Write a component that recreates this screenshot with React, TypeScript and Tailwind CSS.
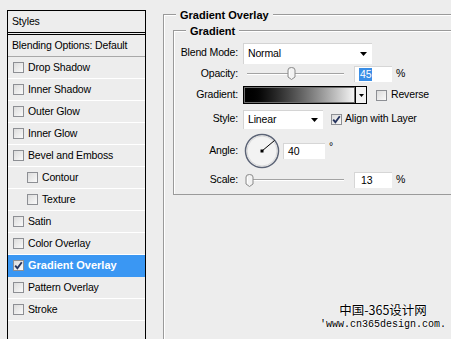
import React from 'react';

const styleRows = [
    { label: 'Drop Shadow' },
    { label: 'Inner Shadow' },
    { label: 'Outer Glow' },
    { label: 'Inner Glow' },
    { label: 'Bevel and Emboss' },
    { label: 'Contour', indent: true },
    { label: 'Texture', indent: true },
    { label: 'Satin' },
    { label: 'Color Overlay' },
    { label: 'Gradient Overlay', active: true },
    { label: 'Pattern Overlay' },
    { label: 'Stroke' },
];

function Check({ checked = false }: { checked?: boolean }) {
    return (
        <span className="w-[11px] h-[11px] shrink-0 border border-[#8d8f94] bg-gradient-to-br from-[#dcdcdc] to-[#fafafa] flex items-center justify-center">
            {checked && (
                <svg width="9" height="9" viewBox="0 0 9 9">
                    <path d="M1.2 4.6 L3.4 7.2 L7.8 1.3" stroke="#26345e" strokeWidth="1.9" fill="none" />
                </svg>
            )}
        </span>
    );
}

function Arrow() {
    return (
        <svg width="7" height="4" viewBox="0 0 7 4">
            <path d="M0 0 H7 L3.5 4 Z" fill="#000" />
        </svg>
    );
}

function Thumb({ className }: { className: string }) {
    return (
        <svg className={`absolute top-[1px] ${className}`} width="9" height="13" viewBox="0 0 9 13">
            <path d="M1 3 Q1 0.5 4.5 0.5 Q8 0.5 8 3 V10 L4.5 12.5 L1 10 Z" fill="#f2f2f2" stroke="#8a8a8a" />
            <path d="M2.5 3 V9.5" stroke="#ffffff" />
        </svg>
    );
}

function Slider({ thumb }: { thumb: string }) {
    return (
        <div className="relative w-[97px] h-[15px] flex items-center">
            <div className="w-full h-[2px] border-t border-[#a3a3a3] bg-white" />
            <Thumb className={thumb} />
        </div>
    );
}

function NumBox({ children, w }: { children: React.ReactNode; w: string }) {
    return (
        <div className={`${w} h-[16px] bg-white border-t border-l border-[#d6d6d6] flex items-center pl-[4px]`}>
            {children}
        </div>
    );
}

export default function App() {
    return (
        <div className="relative w-[451px] h-[339px] overflow-hidden bg-[#ededed] flex font-['Liberation_Sans',sans-serif] text-[10.5px] tracking-[-0.15px] text-black">

            {/* Styles list */}
            <div className="ml-[7px] mt-[10px] w-[139px] h-[340px] shrink-0 border-x border-t border-black flex flex-col">
                <div className="h-[21px] flex items-center pl-[4px]">Styles</div>
                <div className="border-b-[3px] border-double border-black" />
                <div className="h-[22px] flex items-center pl-[4px] border-b border-[#a8a8a8]">Blending Options: Default</div>
                {styleRows.map(r => (
                    <div
                        key={r.label}
                        className={`h-[22px] flex items-center gap-[4px] border-b ${r.indent ? 'pl-[19px]' : 'pl-[5px]'} ${r.active ? 'bg-[#3a97f3] border-[#3a97f3] text-white font-bold text-[11px] tracking-normal' : 'border-white'}`}
                    >
                        <Check checked={r.active} />
                        <span>{r.label}</span>
                    </div>
                ))}
            </div>

            {/* Gradient Overlay group */}
            <div className="flex-1 ml-[17px] mt-[14px] border-l border-t border-[#9a9a9a] shadow-[inset_1px_1px_0_#fff] flex flex-col">
                <div className="-mt-[8px] ml-[12px] px-[4px] w-fit bg-[#ededed] font-bold text-[11px] tracking-normal leading-[16px]">Gradient Overlay</div>

                <div className="ml-[9px] mt-[7px] pb-[6px] border-l border-t border-b border-[#9a9a9a] shadow-[inset_1px_1px_0_#fff] flex flex-col">
                    <div className="-mt-[8px] ml-[12px] px-[4px] w-fit bg-[#ededed] font-bold text-[11px] tracking-normal leading-[16px]">Gradient</div>

                    {/* Blend Mode */}
                    <div className="mt-[3px] h-[22px] flex items-center">
                        <span className="w-[64px] text-right">Blend Mode:</span>
                        <div className="ml-[5px] w-[129px] h-[21px] bg-white border-t border-l border-[#d4d4d4] flex items-center justify-between pl-[4px] pr-[5px]">
                            <span>Normal</span>
                            <Arrow />
                        </div>
                    </div>

                    {/* Opacity */}
                    <div className="mt-[1px] h-[17px] flex items-center">
                        <span className="w-[64px] text-right">Opacity:</span>
                        <div className="ml-[9px]"><Slider thumb="left-[40px]" /></div>
                        <div className="ml-[10px]">
                            <NumBox w="w-[38px]">
                                <span className="bg-[#3a8ee6] text-white leading-[13px] px-[1px]">45</span>
                            </NumBox>
                        </div>
                        <span className="ml-[4px]">%</span>
                    </div>

                    {/* Gradient */}
                    <div className="mt-[4px] h-[18px] flex items-center">
                        <span className="w-[64px] text-right">Gradient:</span>
                        <div className="ml-[5px] w-[124px] h-[18px] border border-black flex">
                            <div className="flex-1 border border-[#6d6d6d] bg-gradient-to-r from-black to-[#f4f4f4]" />
                            <div className="w-[11px] border-l border-black bg-[#f2f2f2] flex items-center justify-center">
                                <svg width="5" height="3" viewBox="0 0 5 3"><path d="M0 0 H5 L2.5 3 Z" fill="#000" /></svg>
                            </div>
                        </div>
                        <div className="ml-[9px]"><Check /></div>
                        <span className="ml-[4px]">Reverse</span>
                    </div>

                    {/* Style */}
                    <div className="mt-[5px] h-[20px] flex items-center">
                        <span className="w-[64px] text-right">Style:</span>
                        <div className="ml-[5px] w-[80px] h-[19px] bg-white border-t border-l border-[#d4d4d4] flex items-center justify-between pl-[4px] pr-[5px]">
                            <span>Linear</span>
                            <Arrow />
                        </div>
                        <div className="ml-[8px]"><Check checked /></div>
                        <span className="ml-[3px]">Align with Layer</span>
                    </div>

                    {/* Angle */}
                    <div className="mt-[4px] h-[36px] flex items-center">
                        <span className="w-[64px] text-right">Angle:</span>
                        <svg className="ml-[6px]" width="36" height="36" viewBox="0 0 36 36">
                            <circle cx="18" cy="18" r="16.5" fill="#f3f3f3" stroke="#5c6476" strokeWidth="1.5" />
                            <circle cx="18" cy="18" r="15" fill="none" stroke="#d9d9d9" strokeWidth="1" />
                            <line x1="18" y1="18" x2="30.5" y2="7.5" stroke="#000" strokeWidth="1" />
                            <rect x="16.5" y="16.5" width="3" height="3" fill="#000" />
                        </svg>
                        <div className="ml-[3px]">
                            <NumBox w="w-[42px]">40</NumBox>
                        </div>
                        <span className="ml-[4px] self-start mt-[8px] leading-[10px]">°</span>
                    </div>

                    {/* Scale */}
                    <div className="mt-[3px] h-[16px] flex items-center">
                        <span className="w-[64px] text-right">Scale:</span>
                        <div className="ml-[9px]"><Slider thumb="-left-[2px]" /></div>
                        <div className="ml-[10px]">
                            <NumBox w="w-[38px]"><span className="pl-[2px]">13</span></NumBox>
                        </div>
                        <span className="ml-[4px]">%</span>
                    </div>
                </div>
            </div>

            {/* watermark */}
            <div className="absolute left-[320px] top-[304px] flex flex-col items-center leading-none tracking-normal text-black [text-shadow:0_0_2px_#fff,0_0_2px_#fff]">
                <span className="font-['Noto_Sans_CJK_SC',sans-serif] text-[12.5px]">中国-365设计网</span>
                <span className="font-['Liberation_Mono',monospace] text-[10px] mt-[3px]">'www.cn365design.com.</span>
            </div>
        </div>
    );
}
